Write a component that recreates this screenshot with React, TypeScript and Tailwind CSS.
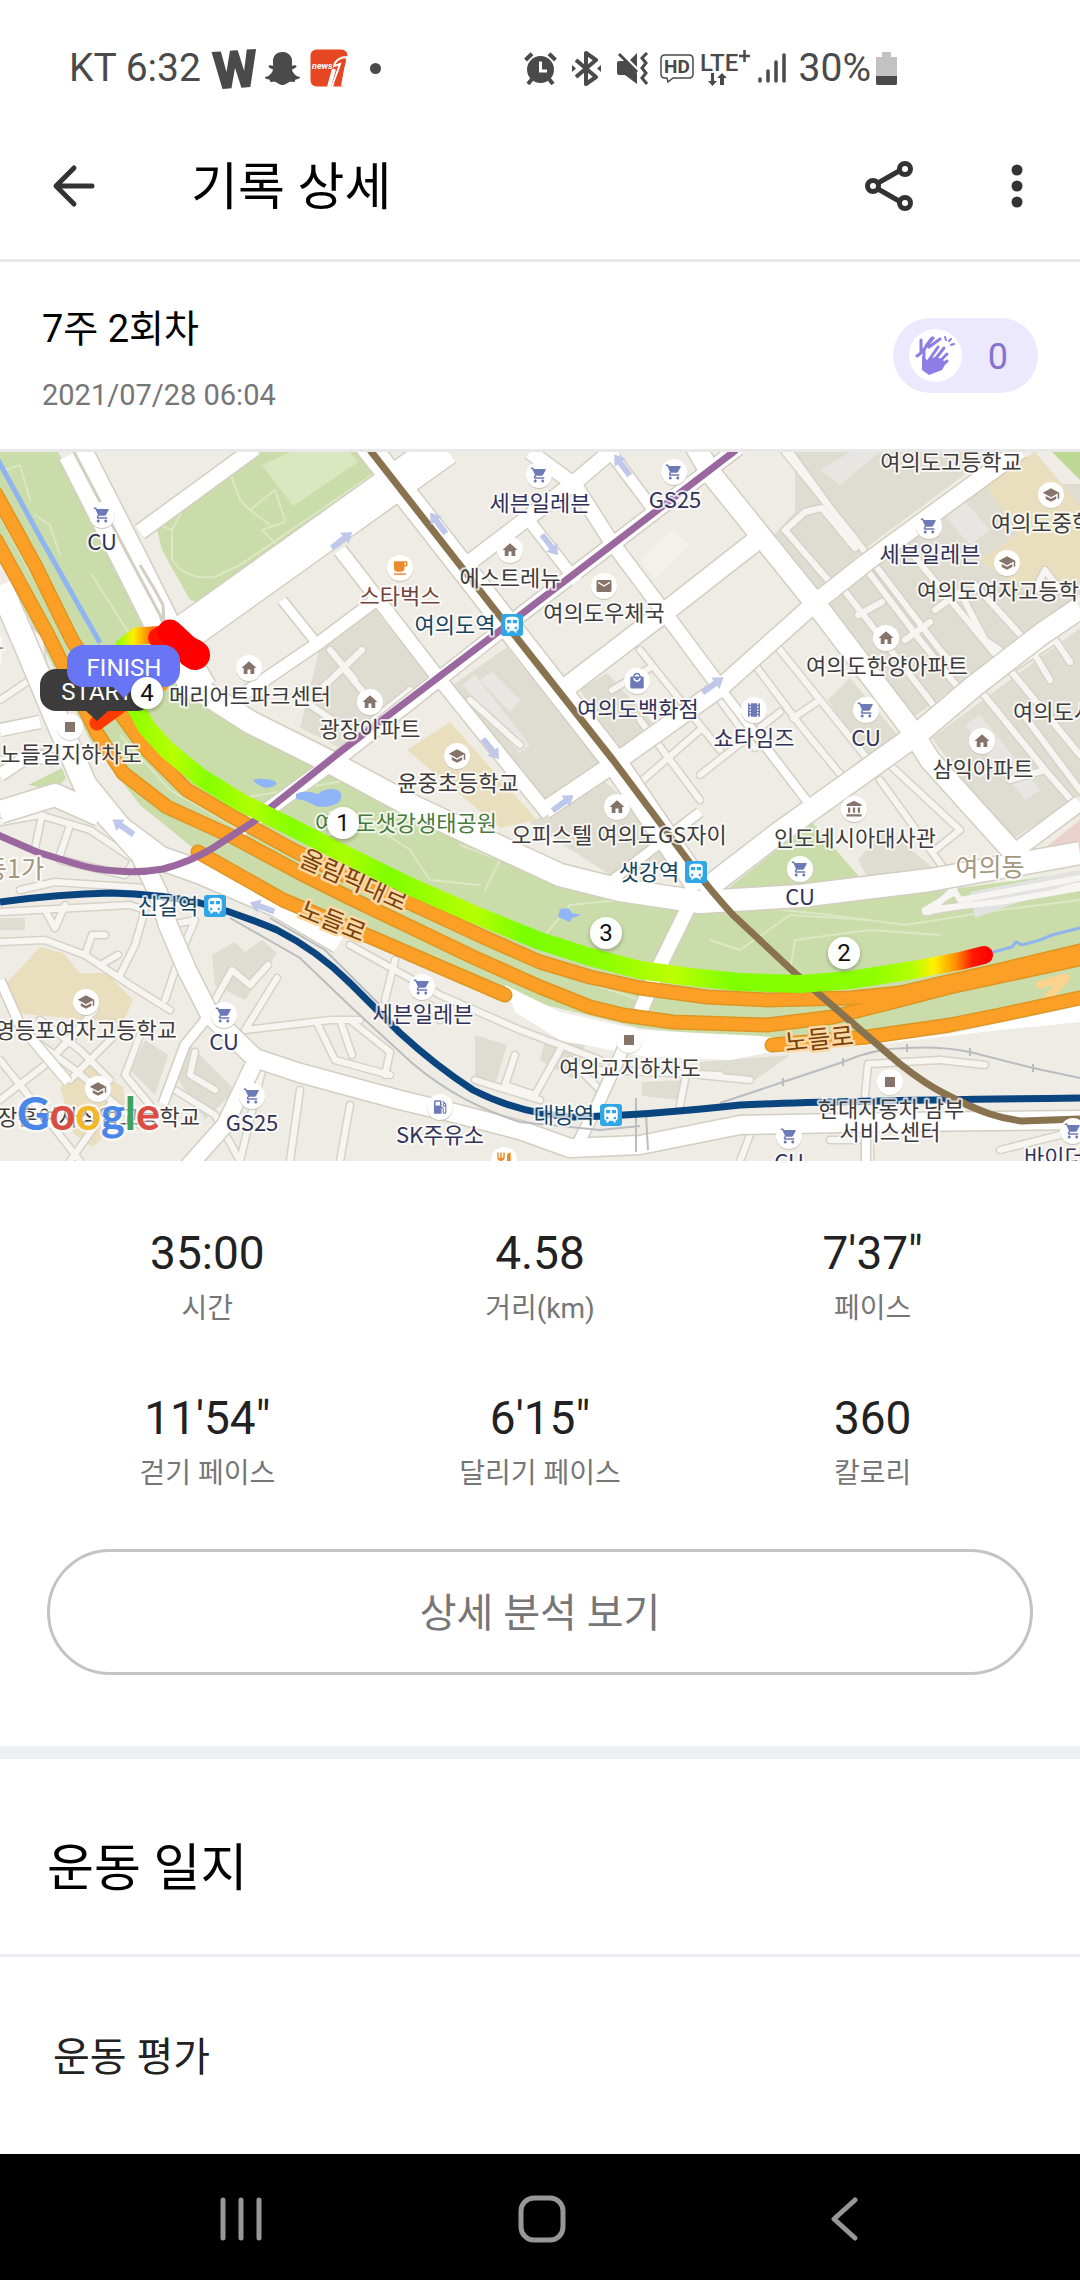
import type { ComponentType, ReactNode } from 'react'
import { FaSnapchatGhost } from 'react-icons/fa'
import {
  MdAccountBalance,
  MdHome,
  MdLocalCafe,
  MdLocalGasStation,
  MdLocalMall,
  MdMail,
  MdRestaurant,
  MdSchool,
  MdShoppingCart,
  MdTheaters,
  MdTrain,
} from 'react-icons/md'

const stats = [
  { value: '35:00', label: '시간' },
  { value: '4.58', label: '거리(km)' },
  { value: `7'37"`, label: '페이스' },
  { value: `11'54"`, label: '걷기 페이스' },
  { value: `6'15"`, label: '달리기 페이스' },
  { value: '360', label: '칼로리' },
]

/* ---------- map data ---------- */

type Shape = { d: string; fill: string }
type Road = { d: string; w: number }

const areas: Shape[] = [
  // river side park
  {
    d: 'M0 452H58L120 560L160 640L215 695L320 757L423 810L480 840L540 867L587 890L640 903L700 913L800 903L930 892L1080 872V992L950 1020L860 1035L760 1040L640 1028L505 995L400 947L198 852L140 805L90 740L0 560Z',
    fill: '#cadca9',
  },
  { d: 'M157 530L230 473L260 452H372L387 470L202 603L190 600L162 550Z', fill: '#cadca9' },
  { d: 'M262 465L290 452H350L358 462L293 506Z', fill: '#dae7c1' },
  { d: 'M730 887L812 822L862 880L733 893Z', fill: '#cadca9' },
  { d: 'M1052 452H1080V480Z', fill: '#bcd894' },
  { d: 'M28 785L62 768L66 778L56 790Z', fill: '#cadca9' },
  { d: 'M68 795L76 782L88 800Z', fill: '#cadca9' },
  // apartment blocks
  { d: 'M795 452H995L870 545L815 595L772 537L795 512Z', fill: '#dfdcd1' },
  { d: 'M828 602L990 484L1080 484V596L915 716Z', fill: '#dfdcd1' },
  { d: 'M932 738L1080 628V796L1008 842Z', fill: '#dfdcd1' },
  { d: 'M450 687L507 647L600 763L537 807Z', fill: '#dfdcd1' },
  { d: 'M320 647L373 607L430 680L385 722L345 750L300 728Z', fill: '#dfdcd1' },
  { d: 'M580 690L607 673L653 723L620 752Z', fill: '#dfdcd1' },
  { d: 'M530 823L603 780L690 858L613 877Z', fill: '#dfdcd1' },
  { d: 'M828 700L850 678L900 738L866 760Z', fill: '#dfdcd1' },
  { d: 'M858 860L885 828L945 878L870 882Z', fill: '#dfdcd1' },
  { d: 'M212 955L235 942L245 952L262 940L277 953L245 1000L215 985Z', fill: '#dfdcd1' },
  { d: 'M130 1070L145 1040L168 1055L155 1095Z', fill: '#dfdcd1' },
  { d: 'M172 1070L190 1045L235 1090L205 1120Z', fill: '#dfdcd1' },
  { d: 'M475 1035L507 1045L495 1085L475 1075Z', fill: '#dfdcd1' },
  { d: 'M545 1040L585 1045L575 1080L540 1060Z', fill: '#dfdcd1' },
  { d: 'M642 1082L685 1080L680 1100L642 1096Z', fill: '#dfdcd1' },
  { d: 'M700 1062L790 1055L755 1080L700 1072Z', fill: '#dfdcd1' },
  { d: 'M0 918H25V930H0Z', fill: '#dfdcd1' },
  // buildings
  { d: 'M463 685L475 675L530 745L519 753Z', fill: '#e9e7e3' },
  { d: 'M492 672L520 700L510 712L480 680Z', fill: '#e9e7e3' },
  { d: 'M640 560L672 530L690 545L655 580Z', fill: '#f4f1ea' },
  { d: 'M935 505L955 490L990 530L970 545Z', fill: '#e8e6e2' },
  { d: 'M965 725L980 715L1040 790L1025 800Z', fill: '#e8e6e2' },
  { d: 'M820 470L850 452H880L840 485Z', fill: '#e8e6e2' },
  // schools
  { d: 'M407 750L450 722L537 820L500 828Z', fill: '#e9dfbf' },
  { d: 'M983 482L1035 452L1080 505V582H1010L980 560L1018 534Z', fill: '#e9dfbf' },
  { d: 'M3 987L40 947L63 953L80 973L107 973L133 1000L123 1023L13 1013Z', fill: '#e9dfbf' },
  { d: 'M60 1087L90 1067L123 1087L127 1113L93 1147L73 1133Z', fill: '#e9dfbf' },
  { d: 'M1080 820L1027 862L1080 855Z', fill: '#ebd2cc' },
]

// narrow streets, drawn in off-white
const streets: string[] = [
  'M785 452L862 548',
  'M862 548L940 650L960 672',
  'M790 452L832 510L856 540',
  'M785 530L828 580',
  'M785 530L805 512L822 508L855 548',
  'M844 590L945 720',
  'M867 570L920 640L960 690',
  'M905 545L1000 660',
  'M858 615L882 602',
  'M905 640L930 622',
  'M935 610L960 592L985 640L1000 650',
  'M975 585L1025 640',
  'M1010 670L1080 755',
  'M1010 670L1055 640L1070 662',
  'M1035 655L1050 680',
  'M1020 710L1080 790',
  'M980 690L1045 770L1010 780',
  'M1045 770L1080 810',
  'M1035 590L1045 570L1060 590',
  'M755 665L800 725L845 780',
  'M780 650L870 762',
  'M793 718L820 700',
  'M700 775L780 712',
  'M720 700L755 748',
  'M880 780L945 870',
  'M890 765L960 830L935 850',
  'M620 800L700 730',
  'M640 720L700 800',
  'M612 690L650 668',
  'M640 650L720 750',
  'M452 692L520 780L540 808',
  'M470 700L520 745',
  'M330 650L355 680',
  'M320 690L362 650',
  'M310 705L355 735L410 690',
  'M345 670L370 700',
  'M0 822L40 815L90 830L135 860L125 875L60 860',
  'M42 815L35 848',
  'M60 855L70 825',
  'M20 890L55 882L145 888',
  'M0 912L130 905L145 910L135 945L120 975',
  'M45 910L55 928L65 905',
  'M0 942L45 940L85 955L130 985L170 1010',
  'M85 955L92 935L105 935',
  'M100 965L118 955',
  'M170 925L195 920L180 955L165 1000',
  'M0 1060L40 1110L80 1161',
  'M0 1100L45 1065L80 1030',
  'M20 1030L75 1070L140 1125',
  'M40 1020L80 1050L110 1080',
  'M50 1060L95 1010',
  'M70 1080L120 1030',
  'M110 1105L70 1161',
  'M140 1035L125 1075L150 1105',
  'M195 1052L190 1075L215 1090',
  'M175 1090L215 1115L240 1161',
  'M215 1000L232 970L250 985L268 965',
  'M277 978L245 1030L330 1020L360 1020',
  'M318 1025L335 1060L390 1075',
  'M340 1020L352 1055',
  'M350 1020L390 1052L385 1075',
  'M300 1090L290 1161',
  'M350 1105L340 1161',
  'M262 1070L240 1161',
  'M350 945L440 995L520 1030L600 1060',
  'M395 960L385 1000',
  'M430 1005L440 1020',
  'M515 1055L505 1085L535 1095L560 1050',
  'M475 1080L540 1100',
  'M570 1060L600 1090',
  'M600 1070L720 1075',
  'M685 1080L680 1105',
  'M940 1060L868 1064L865 1095',
  'M940 1060L985 1065',
  'M700 1075L750 1080',
  'M930 912L960 882',
  'M925 912L1080 885',
  'M740 1161L750 1135',
  'M830 1140H870V1161',
  'M1000 1150L1060 1135',
  'M0 700L30 680L45 690L40 640L20 620',
  'M0 760L60 750',
]

const roads: Road[] = [
  { d: 'M75 452L130 560L165 630L200 690', w: 34 },
  { d: 'M200 690L250 722L330 762L410 805L480 838L560 875L620 890L700 902L800 896L930 880L1080 853', w: 22 },
  { d: 'M175 640L340 522L445 447', w: 36 },
  { d: 'M140 532L255 448', w: 15 },
  { d: 'M366 444L613 760L700 888', w: 24 },
  { d: 'M738 448L523 613L340 757L240 830', w: 14 },
  { d: 'M470 562L575 482L615 448', w: 15 },
  { d: 'M560 692L665 612L757 540', w: 19 },
  { d: 'M545 810L612 765L720 688L815 603L867 562L1000 465L1020 450', w: 17 },
  { d: 'M702 892L780 832L860 775L920 732L973 687L1043 633L1080 608', w: 21 },
  { d: 'M1010 855L1080 803', w: 15 },
  { d: 'M530 452L575 485L610 540L670 620L722 690', w: 14 },
  { d: 'M722 690L810 805', w: 8 },
  { d: 'M610 452L655 512', w: 11 },
  { d: 'M530 522L577 582', w: 11 },
  { d: 'M695 446L712 475L815 603L910 728L930 760L1022 862', w: 20 },
  { d: 'M340 550L440 680L548 814', w: 13 },
  { d: 'M282 600L318 645', w: 9 },
  { d: 'M235 700L320 642L380 597', w: 12 },
  { d: 'M610 882L700 812', w: 9 },
  { d: 'M692 900L660 965L640 1012', w: 14 },
  { d: 'M625 1045L600 1100L575 1150', w: 11 },
  { d: 'M0 585L30 655L55 715L85 785L120 828L160 858L200 872L277 905L340 942', w: 23 },
  { d: 'M0 812L55 795L100 815', w: 22 },
  { d: 'M0 775L30 755L55 760', w: 12 },
  { d: 'M0 730L40 722', w: 12 },
  { d: 'M95 805L140 855L158 893L168 925L187 970L210 1015L255 1058L300 1073L400 1100L450 1112L520 1130L570 1148L640 1145L740 1125L900 1122L1080 1120', w: 18 },
  { d: 'M253 1066L225 1125L185 1170', w: 16 },
  { d: 'M207 1018L185 1045L163 1104', w: 9 },
  { d: 'M0 980L20 1025L68 1082', w: 9 },
  { d: 'M866 1120V1161', w: 8 },
]

const highways = [
  'M-4 494L35 565L72 640L120 713L147 750L187 790L233 817L293 850L350 878L410 903L490 940L540 962L590 977L640 988L707 997L767 1000L850 998L900 993L947 982L1000 970L1084 950',
  'M-4 540L47 633L97 733L123 773L167 807L233 837L300 873L350 898L423 933L473 957L540 987L590 1007L623 1015L673 1022L767 1025L833 1017L900 1000L950 987L1084 958',
  'M198 852L283 900L373 938L440 967L505 995',
  'M772 1045L867 1037L950 1025L1000 1015L1084 997',
]

const parkPaths = [
  'M230 473L185 505L172 530L172 560Q185 580 215 577L240 565L382 468',
  'M172 530L160 525',
  'M230 473L240 500L250 510L270 525',
  'M250 510L275 490L285 520',
  'M275 543L262 530L285 522',
  'M5 470L20 465L30 500',
  'M35 515L50 525L60 555',
  'M92 575L130 635',
  'M230 800L290 790L350 780L400 810',
  'M340 770L360 790L390 795',
  'M350 810L410 850L430 880L480 885',
  'M460 845L500 860L485 890',
  'M545 935L570 905L620 900L690 910',
  'M735 905L830 915L905 925L1000 910L1080 900',
  'M710 940L740 950L790 915L870 920',
  'M790 970L795 940L870 930L940 935',
  'M2 520L75 655',
  'M120 735L170 790L240 830L340 870',
  'M420 915L520 960L640 1000',
]

/* ---------- map pieces ---------- */

type PoiIcon = ComponentType<{ x?: number; y?: number; size?: number; color?: string }>

const BLUE = '#6d7ab8'
const BROWN = '#86736a'
const ORANGE = '#ec8b2e'

const pois: { icon: PoiIcon; color: string; at: [number, number][] }[] = [
  {
    icon: MdShoppingCart,
    color: BLUE,
    at: [[102, 515], [539, 475], [674, 472], [929, 526], [866, 710], [800, 869], [789, 1136], [1073, 1131], [224, 1015], [252, 1096], [422, 987]],
  },
  { icon: MdHome, color: BROWN, at: [[249, 668], [370, 702], [510, 550], [617, 807], [886, 638], [982, 741]] },
  { icon: MdSchool, color: BROWN, at: [[457, 756], [1051, 495], [1007, 563], [86, 1002], [98, 1089]] },
  { icon: MdLocalCafe, color: ORANGE, at: [[400, 568]] },
  { icon: MdMail, color: BROWN, at: [[604, 586]] },
  { icon: MdLocalMall, color: BLUE, at: [[637, 681]] },
  { icon: MdTheaters, color: BLUE, at: [[754, 710]] },
  { icon: MdAccountBalance, color: BROWN, at: [[854, 809]] },
  { icon: MdLocalGasStation, color: BLUE, at: [[440, 1107]] },
  { icon: MdRestaurant, color: ORANGE, at: [[504, 1160]] },
]

const squares: [number, number][] = [[70, 727], [629, 1040], [890, 1082]]
const stations: [number, number][] = [[512, 625], [696, 872], [215, 906], [611, 1115]]

type Label = { t: string; x: number; y: number; c?: string; a?: 'start' | 'middle' | 'end' }

const SHOP = '#31325a'
const RAIL = '#15455e'

const labels: Label[] = [
  { t: 'CU', x: 102, y: 542, c: SHOP },
  { t: '메리어트파크센터', x: 250, y: 696 },
  { t: '광장아파트', x: 370, y: 729 },
  { t: '스타벅스', x: 400, y: 596, c: '#71433a' },
  { t: '노들길지하차도', x: 71, y: 754 },
  { t: '여의도샛강생태공원', x: 406, y: 823, c: '#477b3d' },
  { t: '세븐일레븐', x: 540, y: 503, c: SHOP },
  { t: 'GS25', x: 675, y: 500, c: SHOP },
  { t: '에스트레뉴', x: 510, y: 578 },
  { t: '여의도우체국', x: 604, y: 613 },
  { t: '여의도역', x: 455, y: 625, c: RAIL },
  { t: '여의도백화점', x: 638, y: 709, c: SHOP },
  { t: '윤중초등학교', x: 458, y: 783 },
  { t: '쇼타임즈', x: 754, y: 738, c: SHOP },
  { t: '오피스텔 여의도GS자이', x: 619, y: 835 },
  { t: '샛강역', x: 649, y: 872, c: RAIL },
  { t: '여의도고등학교', x: 951, y: 462 },
  { t: '여의도중학교', x: 991, y: 523, a: 'start' },
  { t: '세븐일레븐', x: 930, y: 554, c: SHOP },
  { t: '여의도여자고등학교', x: 917, y: 591, a: 'start' },
  { t: '여의도한양아파트', x: 887, y: 666 },
  { t: 'CU', x: 866, y: 738, c: SHOP },
  { t: '여의도시범아파트', x: 1013, y: 712, a: 'start' },
  { t: '삼익아파트', x: 983, y: 769 },
  { t: '인도네시아대사관', x: 855, y: 838 },
  { t: 'CU', x: 800, y: 897, c: SHOP },
  { t: '현대자동차 남부', x: 891, y: 1109 },
  { t: '서비스센터', x: 890, y: 1132 },
  { t: 'CU', x: 789, y: 1162, c: SHOP },
  { t: '바이더웨이', x: 1024, y: 1157, c: SHOP, a: 'start' },
  { t: '신길역', x: 168, y: 906, c: RAIL },
  { t: '세븐일레븐', x: 423, y: 1014, c: SHOP },
  { t: '영등포여자고등학교', x: 177, y: 1030, a: 'end' },
  { t: 'CU', x: 224, y: 1042, c: SHOP },
  { t: '장훈여자상업고등학교', x: 200, y: 1117, a: 'end' },
  { t: 'GS25', x: 252, y: 1123, c: SHOP },
  { t: 'SK주유소', x: 440, y: 1135, c: SHOP },
  { t: '여의교지하차도', x: 630, y: 1068 },
  { t: '대방역', x: 564, y: 1115, c: RAIL },
]

const arrows: [number, number, number][] = [
  [342, 540, -38],
  [438, 523, -127],
  [622, 465, -127],
  [550, 545, 52],
  [713, 685, -36],
  [491, 749, 52],
  [563, 803, -36],
  [123, 827, -145],
  [262, 907, -160],
]

const kmMarks: [number, number, string][] = [
  [343, 823, '1'],
  [844, 953, '2'],
  [606, 933, '3'],
  [147, 693, '4'],
]

const TRACK =
  'M136 708L147 728L167 750L200 777L240 802L293 828L340 852L407 885L473 914L540 941L590 957L640 970L690 977L740 982L800 984L850 980L913 970L960 961L984 955'

const Lines = ({ paths, color, width }: { paths: string[]; color: string; width: number }) => (
  <g fill="none" stroke={color} strokeWidth={width} strokeLinejoin="round" strokeLinecap="round">
    {paths.map((d, i) => (
      <path key={i} d={d} />
    ))}
  </g>
)

const RouteMap = () => (
  <svg viewBox="0 452 1080 709" className="block h-auto w-full font-['Noto_Sans_CJK_KR',sans-serif]" role="img" aria-label="운동 경로 지도">
    <defs>
      <linearGradient id="pace" gradientUnits="userSpaceOnUse" x1="130" y1="0" x2="990" y2="0">
        <stop offset="0" stopColor="#8cff00" />
        <stop offset="0.05" stopColor="#b8ff00" />
        <stop offset="0.09" stopColor="#86ff00" />
        <stop offset="0.14" stopColor="#b0ff00" />
        <stop offset="0.19" stopColor="#84ff00" />
        <stop offset="0.25" stopColor="#aaff00" />
        <stop offset="0.3" stopColor="#80ff00" />
        <stop offset="0.4" stopColor="#b8ff00" />
        <stop offset="0.46" stopColor="#78ff00" />
        <stop offset="0.55" stopColor="#8cff00" />
        <stop offset="0.63" stopColor="#bcff00" />
        <stop offset="0.7" stopColor="#80ff00" />
        <stop offset="0.86" stopColor="#8cff00" />
        <stop offset="0.91" stopColor="#b4ff00" />
        <stop offset="0.935" stopColor="#fff000" />
        <stop offset="0.96" stopColor="#ff9000" />
        <stop offset="0.98" stopColor="#ff1800" />
        <stop offset="1" stopColor="#ff0000" />
      </linearGradient>
      <linearGradient id="finishPace" gradientUnits="userSpaceOnUse" x1="118" y1="0" x2="170" y2="0">
        <stop offset="0" stopColor="#90ff00" />
        <stop offset="0.3" stopColor="#ffee00" />
        <stop offset="0.6" stopColor="#ff8000" />
        <stop offset="1" stopColor="#ff1000" />
      </linearGradient>
      <filter id="pinShadow" x="-30%" y="-30%" width="160%" height="170%">
        <feDropShadow dx="0" dy="2" stdDeviation="2" floodOpacity="0.3" />
      </filter>
    </defs>

    <rect y="452" width="1080" height="709" fill="#efece5" />
    {areas.map((a, i) => (
      <path key={i} d={a.d} fill={a.fill} />
    ))}
    <path d="M505 985L560 1012L640 1030L760 1036L850 1045L950 1034L1080 1006V1022L1000 1030L870 1045L770 1052L730 1060L640 1056L560 1040L515 1012Z" fill="#fff" />

    <Lines paths={parkPaths} color="#dce8c4" width={2} />
    <Lines paths={streets} color="#d6d2c7" width={9} />
    <Lines paths={streets} color="#f6f5f2" width={6} />

    <g fill="none" stroke="#d3cec1" strokeLinejoin="round">
      {roads.map((r, i) => (
        <path key={i} d={r.d} strokeWidth={r.w + 3} />
      ))}
    </g>
    <g fill="none" stroke="#fff" strokeLinejoin="round">
      {roads.map((r, i) => (
        <path key={i} d={r.d} strokeWidth={r.w} />
      ))}
    </g>
    <path d="M74 452L128 555L160 615L166 632M140 565L155 590L163 605L164 625" fill="none" stroke="#d3cec2" strokeWidth={3} />
    <path d="M970 892L1080 870V880L975 918Z" fill="#e2e2e3" />
    <Lines paths={['M925 910L955 892L960 900L1080 878', 'M925 910L1000 902L1080 888']} color="#f6f5f2" width={6} />

    {/* ponds and stream */}
    <g fill="#8fb4f8">
      <path d="M253 780Q262 777 275 781Q280 786 266 788Q257 786 253 780Z" />
      <path d="M296 794Q304 789 318 794Q326 787 338 790Q345 796 338 803Q326 809 316 806Q306 800 296 799Z" />
      <path d="M560 909L568 908L572 913L581 915L572 918L570 922L558 917Z" />
    </g>
    <path d="M-2 460L40 537L100 643" fill="none" stroke="#8fb4f0" strokeWidth={5} />
    <path d="M990 953L1012 947L1016 942L1022 945L1040 940L1052 935L1080 928" fill="none" stroke="#8fb4f0" strokeWidth={3} />

    <Lines paths={['M1040 985L1062 978M1046 1000L1066 978']} color="#fbd28e" width={8} />
    <Lines paths={highways} color="#de9622" width={15} />
    <Lines paths={highways} color="#fb9f26" width={12} />

    {/* surface railway */}
    <path
      d="M720 1103L783 1082L843 1062Q875 1048 907 1048Q940 1046 970 1052L1033 1068L1080 1078M230 918L300 958L350 1006L400 1052Q450 1100 520 1122L600 1130L640 1126M270 918L325 950L380 1005M783 1078V1086M843 1058V1066M907 1044V1052M970 1048V1056M1033 1064V1072M636 1098V1152M646 1115L648 1150"
      fill="none"
      stroke="#b9bcc0"
      strokeWidth={2}
    />

    {/* subway lines */}
    <g fill="none" strokeWidth={7} strokeLinejoin="round">
      <path
        d="M0 902Q60 894 110 893Q160 894 200 903Q240 914 277 930Q318 951 350 983L400 1033Q436 1066 473 1090Q520 1114 573 1117Q640 1116 740 1105Q820 1101 1080 1098"
        stroke="#0b457f"
      />
      <path d="M736 450L523 613L340 752L270 808L253 822L213 848Q190 862 163 869Q140 873 117 871Q95 870 73 863L37 852L-2 835" stroke="#9a679f" />
      <path d="M370 450L513 633L613 760L693 867Q710 890 733 915L797 975L857 1027L900 1064Q925 1084 947 1095Q970 1107 990 1114Q1005 1119 1022 1121L1080 1119" stroke="#89734f" />
    </g>

    {/* one-way arrows */}
    {arrows.map(([x, y, deg], i) => (
      <path key={i} d="M-13 -3H3V-7L13 0L3 7V3H-13Z" fill="#bfc7ea" transform={`translate(${x} ${y}) rotate(${deg})`} />
    ))}

    {/* road names */}
    <g fill="#7b420d" stroke="#fcd9a4" strokeWidth={5} strokeLinejoin="round" paintOrder="stroke" fontSize={25} textAnchor="middle">
      <text transform="translate(354 880) rotate(24)" y={9}>올림픽대로</text>
      <text transform="translate(333 921) rotate(22)" y={9}>노들로</text>
      <text transform="translate(819 1039) rotate(-6)" y={9}>노들로</text>
    </g>
    <g fill="#a3987e" stroke="#fff" strokeOpacity={0.8} strokeWidth={4} strokeLinejoin="round" paintOrder="stroke" fontSize={25}>
      <text x={990} y={876} textAnchor="middle">여의동</text>
      <text x={44} y={878} textAnchor="end">동1가</text>
      <text x={4} y={659} textAnchor="end">가</text>
    </g>

    {pois.map(({ icon: Icon, color, at }) =>
      at.map(([x, y]) => (
        <g key={`${x}-${y}`}>
          <circle cx={x} cy={y + 1} r={13} fill="#c9c5bb" />
          <circle cx={x} cy={y} r={13} fill="#fff" />
          <Icon x={x - 9} y={y - 9} size={18} color={color} />
        </g>
      )),
    )}
    {squares.map(([x, y]) => (
      <g key={x}>
        <circle cx={x} cy={y + 1} r={13} fill="#d5d1c8" />
        <circle cx={x} cy={y} r={13} fill="#fff" />
        <rect x={x - 5} y={y - 5} width={10} height={10} fill={BROWN} />
      </g>
    ))}

    <g fontSize={22} stroke="#fff" strokeOpacity={0.75} strokeWidth={4} strokeLinejoin="round" paintOrder="stroke">
      {labels.map((l) => (
        <text key={`${l.x}-${l.y}`} x={l.x} y={l.y + 8} fill={l.c ?? '#3d3b3b'} textAnchor={l.a ?? 'middle'}>
          {l.t}
        </text>
      ))}
    </g>
    {stations.map(([x, y]) => (
      <g key={x}>
        <rect x={x - 11} y={y - 11} width={22} height={22} rx={3} fill="#2fa6e6" />
        <MdTrain x={x - 10} y={y - 10} size={20} color="#fff" />
      </g>
    ))}

    {/* recorded track */}
    <g fill="none" strokeLinecap="round" strokeLinejoin="round">
      <path d="M97 723L120 706" stroke="#ff3a00" strokeWidth={15} />
      <path d="M150 690L162 684" stroke="#ff9a20" strokeWidth={14} />
      <path d={TRACK} stroke="url(#pace)" strokeWidth={18} />
      <path d="M124 646L137 636L168 634" stroke="url(#finishPace)" strokeWidth={17} />
      <path d="M158 638L170 631L183 642" stroke="#ff1200" strokeWidth={20} />
      <path d="M170 632L184 645L193 652" stroke="#ff0000" strokeWidth={25} />
      <path d="M192 653L195 655" stroke="#ff0000" strokeWidth={30} />
    </g>

    {/* start / finish flags */}
    <g className="font-[Roboto,sans-serif]" fontSize={24} textAnchor="middle" fill="#fff">
      <path d="M56 669H137A16 16 0 0 1 153 685V695A16 16 0 0 1 137 711H108L97 721L86 711H56A16 16 0 0 1 40 695V685A16 16 0 0 1 56 669Z" fill="#3c3c3c" />
      <text x={97} y={700}>START</text>
      <path d="M83 645H164A16 16 0 0 1 180 661V671A16 16 0 0 1 164 687H135L124 698L113 687H83A16 16 0 0 1 67 671V661A16 16 0 0 1 83 645Z" fill="#6876f6" />
      <text x={124} y={676}>FINISH</text>
    </g>
    <g className="font-[Roboto,sans-serif]" fontSize={24} textAnchor="middle">
      {kmMarks.map(([x, y, n]) => (
        <g key={n}>
          <circle cx={x} cy={y} r={16} fill="#fff" filter="url(#pinShadow)" />
          <text x={x} y={y + 8} fill="#111">{n}</text>
        </g>
      ))}
    </g>

    <text
      className="font-[Lato,sans-serif]"
      x={17}
      y={1130}
      fontSize={45}
      stroke="#fff"
      strokeOpacity={0.6}
      strokeWidth={5}
      strokeLinejoin="round"
      paintOrder="stroke"
      fontWeight={700}
    >
      <tspan fill="#4a85e8">G</tspan>
      <tspan fill="#dc4d41">o</tspan>
      <tspan fill="#f2b827">o</tspan>
      <tspan fill="#4a85e8">g</tspan>
      <tspan fill="#3ba45a">l</tspan>
      <tspan fill="#dc4d41">e</tspan>
    </text>
  </svg>
)

/* ---------- status bar ---------- */

const StatusBar = () => (
  <div className="flex h-[112px] items-center justify-between pt-6 pr-[183px] pl-[69px] text-[39px] leading-none text-[#4a4a4a]">
    <div className="flex items-center">
      <span>KT 6:32</span>
      <svg width="40" height="48" viewBox="0 0 40 48" className="ml-[14px] overflow-visible font-['Liberation_Sans_Narrow',Roboto,sans-serif]">
        <text x="20" y="43" fontSize="50" fontWeight="700" textAnchor="middle" fill="#4a4a4a" stroke="#4a4a4a" strokeWidth="2" transform="rotate(-4 20 24)">W</text>
      </svg>
      <FaSnapchatGhost className="ml-[10px] size-[35px]" />
      <svg width="38" height="38" viewBox="0 0 38 38" className="ml-[10px]">
        <rect x="0.5" y="0.5" width="37" height="37" rx="6" fill="#e54722" />
        <text x="2" y="20" fontSize="9" fontStyle="italic" fontWeight="700" fill="#fff">news</text>
        <path d="M38 8Q26 8 24 17L30 15L22 38" fill="none" stroke="#fff" strokeWidth="2" />
        <path d="M36 9L31 37H38V9Z" fill="#fff" />
        <path d="M34 10L30 20L24 34H30L36 12Z" fill="#e54722" />
        <path d="M24 20L19 38" stroke="#fff" strokeWidth="4" />
      </svg>
      <span className="ml-[22px] size-[11px] rounded-full bg-[#4a4a4a]" />
    </div>

    <div className="flex items-center">
      {/* alarm */}
      <svg width="33" height="33" viewBox="0 0 33 33" fill="none" stroke="#4a4a4a" strokeWidth="4">
        <circle cx="16.500" cy="17.500" r="13.500" fill="#4a4a4a" stroke="none" />
        <path d="M1.500 8L8 1.800M31.500 8L25 1.800M4 32L8 27M29 32L25 27" />
        <path d="M16.500 9.500V19H23" stroke="#fff" strokeWidth="3" />
      </svg>
      {/* bluetooth */}
      <svg width="29" height="35" viewBox="0 0 29 35" className="ml-[15px]" fill="none" stroke="#4a4a4a" strokeWidth="4" strokeLinejoin="round">
        <path d="M4 9L24 26L14 33V2L24 9L4 26" />
        <path d="M0 14L4 17.500L0 21ZM29 14L25 17.500L29 21Z" fill="#4a4a4a" stroke="none" />
      </svg>
      {/* muted, vibrate */}
      <svg width="32" height="33" viewBox="0 0 32 33" className="ml-4" fill="#4a4a4a">
        <path d="M0 11Q0 9 2 9H8L20 21V32L8 23H2Q0 23 0 21ZM13 8L20 1V15Z" />
        <path d="M2 2L20 20" stroke="#4a4a4a" strokeWidth="3" />
        <path d="M30 1L25 6L29 11L25 16L29 21L25 26L30 32" fill="none" stroke="#4a4a4a" strokeWidth="3" />
      </svg>
      <svg width="34" height="29" viewBox="0 0 34 29" className="ml-[11px]">
        <path d="M5 1H29Q33 1 33 5V20Q33 24 29 24H13L8 28L7 24H5Q1 24 1 20V5Q1 1 5 1Z" fill="none" stroke="#4a4a4a" strokeWidth="1.500" />
        <text x="17" y="19" fontSize="19" fontWeight="700" textAnchor="middle" fill="#4a4a4a">HD</text>
      </svg>
      <svg width="51" height="38" viewBox="0 0 51 38" className="ml-[6px]" fill="#4a4a4a">
        <text x="0" y="22" fontSize="24" fontWeight="500">LTE</text>
        <path d="M39 7H50M44.500 1V13" stroke="#4a4a4a" strokeWidth="2.500" />
        <path d="M11 24H14V32H17L12.500 37L8 32H11ZM20 36H24V29H27L22 24L17 29H20Z" />
      </svg>
      <svg width="28" height="32" viewBox="0 0 28 32" className="ml-[7px]" stroke="#4a4a4a" strokeWidth="3.500" strokeLinecap="round">
        <path d="M2 27V29M10 19V29M18 10V29M26 3V29" />
      </svg>
      <span className="ml-[13px]">30%</span>
      <svg width="21" height="33" viewBox="0 0 21 33" className="ml-[5px]">
        <path d="M6 0H15V5H21V33H0V5H6Z" fill="#c2c2c2" />
        <path d="M0 24H21V31Q21 33 19 33H2Q0 33 0 31Z" fill="#4a4a4a" />
      </svg>
    </div>
  </div>
)

const Clap = () => (
  <svg width="41" height="41" viewBox="0 0 41 41" fill="none" stroke="#8f7de6" strokeLinecap="round" strokeLinejoin="round">
    {/* back hand */}
    <path d="M2 21L6 18V5M6 18L18 3M11 11L17 3M14 12L25 4" strokeWidth="3" />
    {/* front hand */}
    <path d="M7 21V35L14 40L27 35L31 28L27 24L20 22L12 25Z" fill="#8f7de6" stroke="none" />
    <path d="M9 34V15M14 25L23 12M18 27L29 13M22 29L32 19M25 32L32 26" strokeWidth="3" />
    <path d="M30 2L31 5M36 4L34 6M39 9L36 10" strokeWidth="2" />
  </svg>
)

const Section = ({ title, className, children }: { title: string; className: string; children?: ReactNode }) => (
  <section>
    <h2 className={className}>{title}</h2>
    {children}
  </section>
)

const App = () => {
  return (
    <div className="flex min-h-screen flex-col bg-white font-[Roboto,'Noto_Sans_CJK_KR',sans-serif] text-[#222222]">
      <StatusBar />

      <header className="flex h-[150px] items-center border-b-[3px] border-[#e8e8e8] pr-[57px] pl-[52px] text-[#333333]">
        <button type="button" aria-label="뒤로">
          <svg width="44" height="44" viewBox="0 0 44 44" fill="none" stroke="currentColor" strokeWidth="5" strokeLinecap="round" strokeLinejoin="round">
            <path d="M22 4L4 22L22 40M5 22H40" />
          </svg>
        </button>
        <h1 className="ml-[95px] flex-1 pt-1 text-[51px] leading-[64px] text-black">기록 상세</h1>
        <button type="button" aria-label="공유">
          <svg width="48" height="52" viewBox="0 0 48 52" fill="none" stroke="currentColor" strokeWidth="5">
            <path d="M13 23L34 11M13 29L34 41" />
            <circle cx="8" cy="26" r="5.500" />
            <circle cx="40" cy="9" r="5.500" />
            <circle cx="40" cy="43" r="5.500" />
          </svg>
        </button>
        <button type="button" aria-label="더보기" className="ml-[98px]">
          <svg width="12" height="44" viewBox="0 0 12 44" fill="currentColor">
            <circle cx="6" cy="6" r="5.500" />
            <circle cx="6" cy="22" r="5.500" />
            <circle cx="6" cy="38" r="5.500" />
          </svg>
        </button>
      </header>

      <main className="flex-1">
        <div className="flex h-[190px] items-center justify-between border-b-[3px] border-[#e8e8e8] px-[42px]">
          <div className="flex flex-col gap-[18px] pt-1">
            <p className="text-[38px] leading-[56px] text-black">7주 2회차</p>
            <p className="text-[29px] leading-[40px] text-[#767676]">2021/07/28 06:04</p>
          </div>
          <button type="button" aria-label="박수 0" className="flex h-[75px] items-center rounded-full bg-[#ece8fd] pr-[30px] pl-4">
            <span className="flex size-[53px] items-center justify-center rounded-full bg-white">
              <Clap />
            </span>
            <span className="ml-[26px] pt-[2px] text-[36px] leading-none text-[#8474cf]">0</span>
          </button>
        </div>

        <RouteMap />

        <dl className="grid grid-cols-3 gap-y-[61px] px-[41px] pt-[64px] text-center">
          {stats.map((s) => (
            <div key={s.label} className="flex flex-col-reverse gap-2">
              <dt className="text-[28px] leading-[40px] text-[#767676]">{s.label}</dt>
              <dd className="text-[46px] leading-[56px]">{s.value}</dd>
            </div>
          ))}
        </dl>

        <div className="px-[47px] pt-[55px] pb-[71px]">
          <button type="button" className="h-[126px] w-full rounded-full border-[3px] border-[#c3c3c3] pt-1 text-[40px] text-[#767676]">
            상세 분석 보기
          </button>
        </div>

        <Section
          title="운동 일지"
          className="flex h-[211px] items-center border-t-[13px] border-b-[3px] border-t-[#eeeff3] border-b-[#ededf3] px-[47px] pt-6 text-[51px] leading-[64px] text-black"
        >
          <h3 className="flex h-[197px] items-center px-[53px] pt-1 text-[40px] leading-[56px]">운동 평가</h3>
        </Section>
      </main>

      <nav className="grid h-[126px] grid-cols-3 items-center bg-black pt-1 pr-[85px] pl-[90px] text-[#979797]">
        <button type="button" aria-label="최근 앱" className="flex justify-center">
          <svg width="42" height="44" viewBox="0 0 42 44" stroke="currentColor" strokeWidth="5" strokeLinecap="round">
            <path d="M3 3V41M21 3V41M39 3V41" />
          </svg>
        </button>
        <button type="button" aria-label="홈" className="flex justify-center">
          <svg width="48" height="48" viewBox="0 0 48 48" fill="none" stroke="currentColor" strokeWidth="5">
            <rect x="3" y="3" width="42" height="42" rx="13" />
          </svg>
        </button>
        <button type="button" aria-label="뒤로 가기" className="flex justify-center">
          <svg width="28" height="44" viewBox="0 0 28 44" fill="none" stroke="currentColor" strokeWidth="5" strokeLinecap="round" strokeLinejoin="round">
            <path d="M25 3L4 22L25 41" />
          </svg>
        </button>
      </nav>
    </div>
  )
}

export default App
